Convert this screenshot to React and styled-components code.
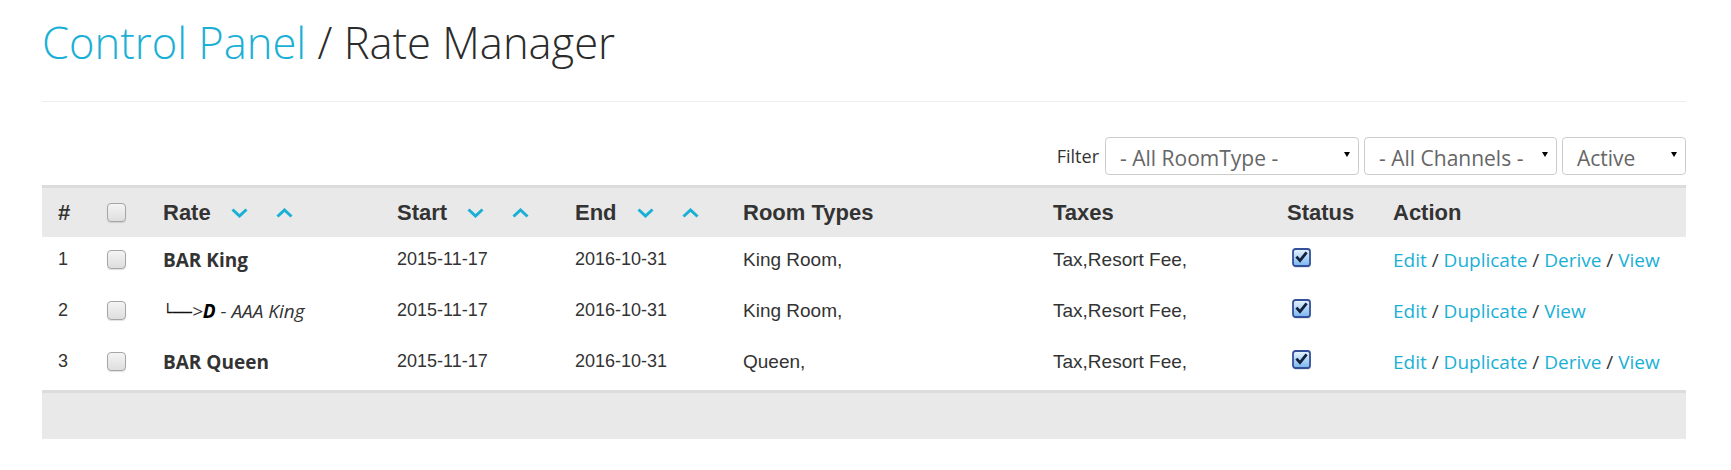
import React from 'react';
import styled, { createGlobalStyle } from 'styled-components';

const GlobalStyle = createGlobalStyle`
    body{
        margin:0;
        background:#fff;
        color:#333;
        font-family:"Open Sans", "Liberation Sans", sans-serif;
    }
`;

const COLS = '49px 56px 234px 178px 168px 310px 234px 106px 309px';
const LINK = '#1ab0d6';

const StyledPage = styled.div`
    padding:19px 45px 30px 42px;
`;
const StyledTitle = styled.h1`
    margin:0;
    font-family:"Open Sans", sans-serif;
    font-weight:300;
    font-size:43.5px;
    line-height:47px;
    color:#2b2b2b;
`;
const StyledCrumb = styled.a`
    color:${LINK};
    text-decoration:none;
`;
const StyledRule = styled.hr`
    margin:35px 0 0;
    border:none;
    border-top:1px solid #eee;
`;
const StyledFilterBar = styled.div`
    display:flex;
    justify-content:flex-end;
    align-items:center;
    gap:5px;
    margin-top:35px;
    margin-bottom:10px;
`;
const StyledFilterLabel = styled.span`
    font-size:18px;
    color:#333;
    margin-right:1px;
`;
const StyledSelect = styled.div`
    box-sizing:border-box;
    width:${({w})=>w}px;
    height:38px;
    border:1px solid #ccc;
    border-radius:4px;
    display:flex;
    align-items:center;
    justify-content:space-between;
    padding:3px 8px 0 14px;
    font-size:21px;
    color:#666;
    background:#fff;
`;
const StyledCaret = styled.span`
    width:0;
    height:0;
    margin-top:-6px;
    border-left:3px solid transparent;
    border-right:3px solid transparent;
    border-top:5px solid #000;
`;
const StyledHeadRow = styled.div`
    display:grid;
    grid-template-columns:${COLS};
    height:49px;
    align-items:center;
    background:#e9e9e9;
    border-top:3px solid #dcdcdc;
    font-family:"Liberation Sans", Arial, sans-serif;
    font-weight:bold;
    font-size:22px;
    color:#333;
`;
const StyledRow = styled.div`
    display:grid;
    grid-template-columns:${COLS};
    height:51px;
    align-items:center;
    font-family:"Liberation Sans", Arial, sans-serif;
    font-size:18px;
    color:#333;
`;
const StyledCell = styled.div`
    padding:0 16px ${({body})=>body ? '6px' : '0'};
    display:flex;
    align-items:center;
    white-space:nowrap;
    font-size:${({size})=>size ? size+'px' : 'inherit'};
`;
const StyledSort = styled.svg`
    width:17px;
    height:10px;
    margin-left:${({gap})=>gap}px;
`;
const StyledBox = styled.span`
    box-sizing:border-box;
    display:inline-block;
    width:19px;
    height:19px;
    border:1px solid #a6a6a6;
    border-radius:4px;
    background:linear-gradient(#f4f4f4, #dedede);
    box-shadow:0 1px 1px rgba(0,0,0,0.12);
`;
const StyledRateName = styled.span`
    font-family:"Open Sans", sans-serif;
    font-weight:700;
    font-size:19px;
    color:#333;
`;
const StyledDerived = styled.span`
    font-family:"Open Sans", sans-serif;
    font-style:italic;
    font-size:19px;
    color:#333;
    b{ color:#000; }
`;
const StyledTree = styled.span`
    font-family:"DejaVu Sans", sans-serif;
    font-style:normal;
    font-size:16px;
    color:#111;
`;
const StyledActions = styled.div`
    font-family:"Open Sans", sans-serif;
    font-size:19px;
    color:#333;
    a{
        color:${LINK};
        text-decoration:none;
    }
`;
const StyledStatus = styled.svg`
    width:20px;
    height:20px;
    margin-left:5px;
    margin-top:-3px;
`;
const StyledFooter = styled.div`
    height:46px;
    background:#e9e9e9;
    border-top:3px solid #dcdcdc;
`;

const Sort = ({up, gap}) => (
    <StyledSort gap={gap} viewBox="0 0 17 10">
        <polyline points={up ? "1.5,8.5 8.5,2 15.5,8.5" : "1.5,1.5 8.5,8 15.5,1.5"} fill="none" stroke={LINK} strokeWidth="3" />
    </StyledSort>
);

const Checked = () => (
    <StyledStatus viewBox="0 0 20 20">
        <defs>
            <linearGradient id="chk" x1="0" y1="0" x2="0" y2="1">
                <stop offset="0" stopColor="#eaf5fe" />
                <stop offset="1" stopColor="#79b6ec" />
            </linearGradient>
        </defs>
        <rect x="1.5" y="2.5" width="17" height="17" rx="2.5" fill="#7d8594" opacity="0.45" />
        <rect x="1" y="1" width="17" height="17" rx="2.5" fill="url(#chk)" stroke="#34509a" strokeWidth="1.8" />
        <path d="M4.4 8.6 L8 12.6 L14.6 4.4" fill="none" stroke="#14213d" strokeWidth="2.8" />
    </StyledStatus>
);

const rates = [
    {id:1, name:'BAR King', room:'King Room,', derive:true},
    {id:2, name:'AAA King', room:'King Room,', derived:true},
    {id:3, name:'BAR Queen', room:'Queen,', derive:true},
];

const App = () => (
    <>
        <GlobalStyle />
        <StyledPage>
            <StyledTitle><StyledCrumb href="#">Control Panel</StyledCrumb> / Rate Manager</StyledTitle>
            <StyledRule />
            <StyledFilterBar>
                <StyledFilterLabel>Filter</StyledFilterLabel>
                <StyledSelect w={254}>- All RoomType -<StyledCaret /></StyledSelect>
                <StyledSelect w={193}>- All Channels -<StyledCaret /></StyledSelect>
                <StyledSelect w={124}>Active<StyledCaret /></StyledSelect>
            </StyledFilterBar>
            <StyledHeadRow>
                <StyledCell>#</StyledCell>
                <StyledCell><StyledBox /></StyledCell>
                <StyledCell>Rate<Sort gap={20} /><Sort up gap={28} /></StyledCell>
                <StyledCell>Start<Sort gap={20} /><Sort up gap={28} /></StyledCell>
                <StyledCell>End<Sort gap={20} /><Sort up gap={28} /></StyledCell>
                <StyledCell>Room Types</StyledCell>
                <StyledCell>Taxes</StyledCell>
                <StyledCell>Status</StyledCell>
                <StyledCell>Action</StyledCell>
            </StyledHeadRow>
            {rates.map(r => (
                <StyledRow key={r.id}>
                    <StyledCell body>{r.id}</StyledCell>
                    <StyledCell body><StyledBox /></StyledCell>
                    <StyledCell body>
                        {r.derived
                            ? <StyledDerived><StyledTree>└──</StyledTree>&gt;<b>D</b> - {r.name}</StyledDerived>
                            : <StyledRateName>{r.name}</StyledRateName>}
                    </StyledCell>
                    <StyledCell body>2015-11-17</StyledCell>
                    <StyledCell body>2016-10-31</StyledCell>
                    <StyledCell body size={19}>{r.room}</StyledCell>
                    <StyledCell body size={19}>Tax,Resort Fee,</StyledCell>
                    <StyledCell body><Checked /></StyledCell>
                    <StyledCell body>
                        <StyledActions>
                            <a href="#">Edit</a> / <a href="#">Duplicate</a> / {r.derive && <><a href="#">Derive</a> / </>}<a href="#">View</a>
                        </StyledActions>
                    </StyledCell>
                </StyledRow>
            ))}
            <StyledFooter />
        </StyledPage>
    </>
);

export default App;
